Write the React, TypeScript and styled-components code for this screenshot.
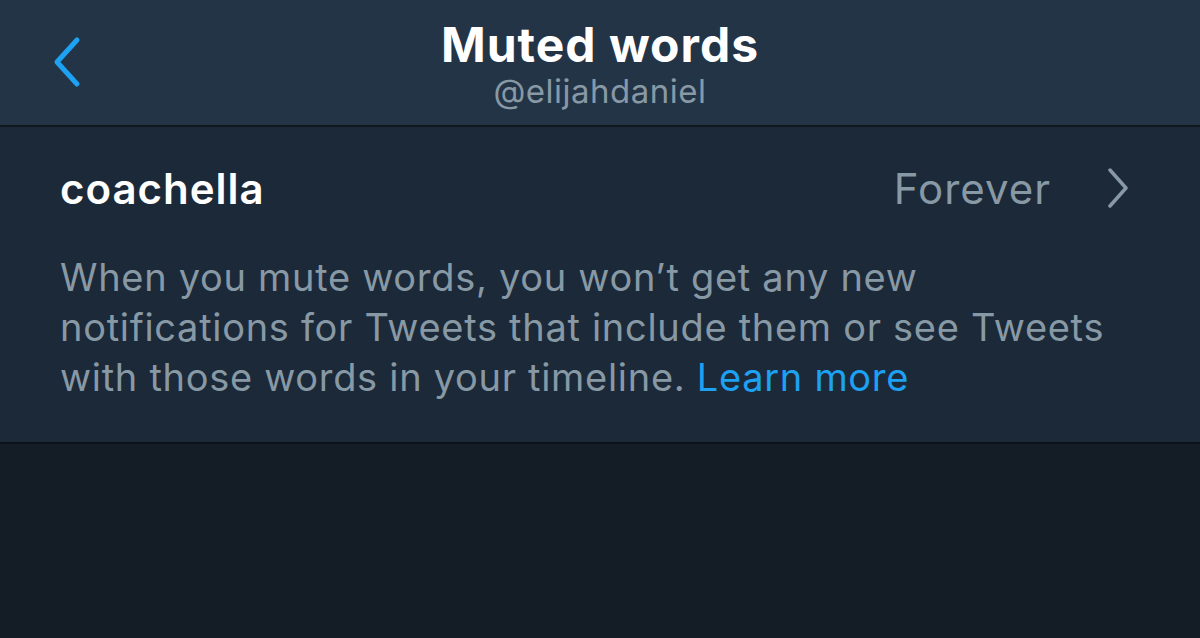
import styled, { createGlobalStyle } from "styled-components";

const GlobalStyle = createGlobalStyle`
  html, body {
    margin: 0;
    padding: 0;
    background: #141d26;
    font-family: Inter, "Liberation Sans", sans-serif;
  }
`;

export default function App() {
  return (
    <Page>
      <GlobalStyle />
      <Header>
        <BackButton aria-label="Back">
          <svg width="32" height="52" viewBox="0 0 32 52">
            <path
              d="M26 4 L6 26 L26 48"
              fill="none"
              stroke="#1da1f2"
              strokeWidth="5"
              strokeLinecap="round"
              strokeLinejoin="round"
            />
          </svg>
        </BackButton>
        <Title>
          <h1>Muted words</h1>
          <h2>@elijahdaniel</h2>
        </Title>
      </Header>
      <Section>
        <WordRow>
          <Word>coachella</Word>
          <Duration>
            Forever
            <svg width="20" height="40" viewBox="0 0 20 40">
              <path
                d="M2 2 L18 20 L2 38"
                fill="none"
                stroke="#8899a6"
                strokeWidth="3.5"
                strokeLinecap="round"
                strokeLinejoin="round"
              />
            </svg>
          </Duration>
        </WordRow>
        <Note>
          When you mute words, you won’t get any new notifications for Tweets
          that include them or see Tweets with those words in your timeline.{" "}
          <LearnMore href="#">Learn more</LearnMore>
        </Note>
      </Section>
    </Page>
  );
}

const Page = styled.div`
  min-height: 638px;
  background: #141d26;
`;

const Header = styled.header`
  position: relative;
  height: 125px;
  background: #243447;
  border-bottom: 2px solid #10171e;
  display: flex;
  justify-content: center;
  align-items: center;
`;

const BackButton = styled.button`
  position: absolute;
  left: 51px;
  top: 36px;
  padding: 0;
  border: none;
  background: none;
  display: flex;
`;

const Title = styled.div`
  display: flex;
  flex-direction: column;
  align-items: center;
  margin-top: 2px;
  h1 {
    margin: 0;
    color: #ffffff;
    font-size: 48px;
    font-weight: 700;
    line-height: 54px;
    letter-spacing: 1px;
  }
  h2 {
    margin: 0;
    color: #8899a6;
    font-size: 33px;
    font-weight: 400;
    line-height: 38px;
    letter-spacing: 0.5px;
  }
`;

const Section = styled.section`
  background: #1c2938;
  border-bottom: 2px solid #0c1218;
  padding: 0 60px 40px 60px;
`;

const WordRow = styled.div`
  height: 122px;
  margin-right: 12px;
  display: flex;
  align-items: center;
  justify-content: space-between;
`;

const Word = styled.span`
  color: #ffffff;
  font-size: 42px;
  font-weight: 600;
  letter-spacing: 1px;
`;

const Duration = styled.span`
  display: flex;
  align-items: center;
  gap: 57px;
  color: #8899a6;
  font-size: 42px;
  letter-spacing: 1px;
`;

const Note = styled.p`
  margin: 3px 0 0;
  max-width: 1075px;
  color: #8899a6;
  font-size: 38px;
  line-height: 50px;
  letter-spacing: 0.7px;
`;

const LearnMore = styled.a`
  color: #1da1f2;
  text-decoration: none;
`;
